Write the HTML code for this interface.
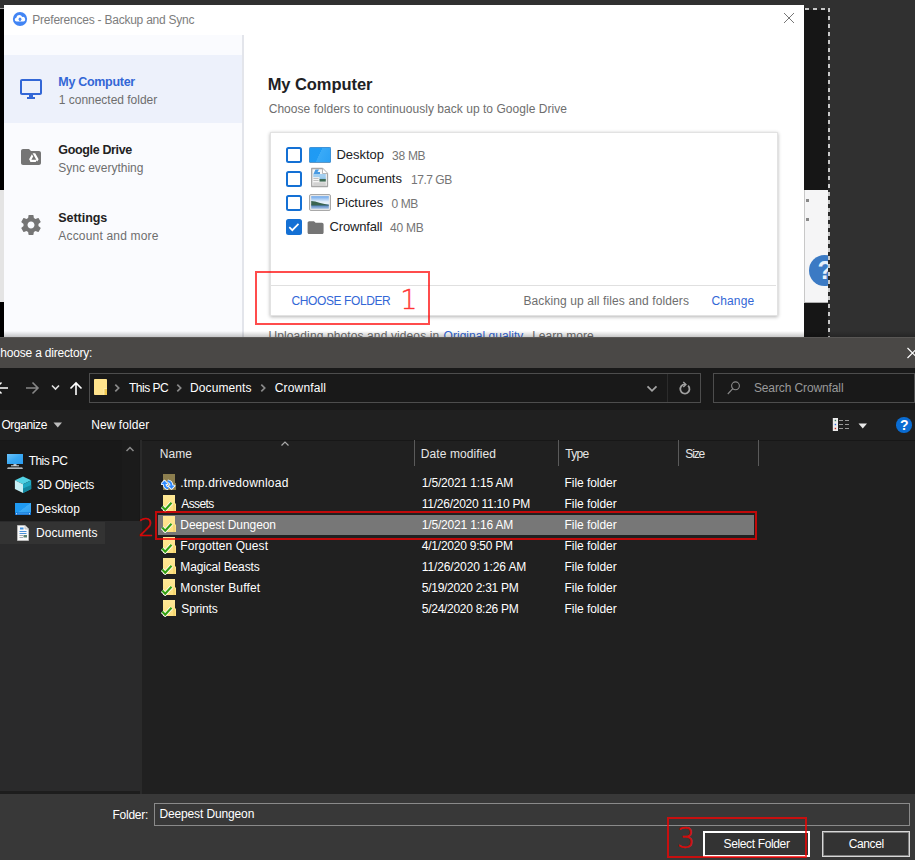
<!DOCTYPE html>
<html><head><meta charset="utf-8">
<style>
*{box-sizing:border-box;margin:0;padding:0}
html,body{width:915px;height:860px;overflow:hidden;background:#303030}
body{position:relative;font-family:"Liberation Sans",sans-serif}
.a{position:absolute}
.t{position:absolute;white-space:nowrap;line-height:1.15}
.cb{width:16px;height:16px;border:2px solid #1470d4;border-radius:2.500px;background:#fff}
.cb.on{background:#1470d4}
.num{-webkit-text-stroke:0.550px currentColor;position:absolute;font-family:"DejaVu Sans Light","DejaVu Sans",sans-serif;font-weight:200;line-height:1;white-space:nowrap}
</style></head><body>

<div class="a" style="left:0;top:9px;width:4px;height:328px;background:#000"></div>
<div class="a" style="left:0;top:8px;width:4px;height:1px;background:#999"></div>
<div class="a" style="left:0;top:190px;width:4px;height:112px;background:#e4e4e4"></div>
<div class="a" style="left:804px;top:8px;width:24px;height:329px;background:#161616"></div>
<div class="a" style="left:804px;top:190px;width:24px;height:113px;background:#f5f5f6;overflow:hidden;border-left:1px solid #c8c8c8;border-bottom:1px solid #b0b0b0">
<div style="position:absolute;left:3.500px;top:65px;width:31px;height:31px;border-radius:50%;background:#3b7ac4"></div>
<div class="t" style="left:12.500px;top:66px;font-size:25px;font-weight:bold;color:#e8f0fa">?</div>
<div style="position:absolute;left:1px;top:9px;width:3px;height:3px;background:#888"></div>
<div style="position:absolute;left:1px;top:28px;width:3px;height:3px;background:#888"></div>
</div>
<div class="a" style="left:805px;top:8px;width:25px;height:2px;background:repeating-linear-gradient(90deg,#c8c8c8 0,#c8c8c8 4px,#2a2a2a 4px,#2a2a2a 8px)"></div>
<div class="a" style="left:828px;top:8px;width:2px;height:329px;background:repeating-linear-gradient(180deg,#c8c8c8 0,#c8c8c8 4px,#2a2a2a 4px,#2a2a2a 8px)"></div>

<div class="a" style="left:4px;top:5px;width:800px;height:332px;background:#fff"></div>
<div class="a" style="left:4px;top:35px;width:238.300px;height:302px;background:#fafbfe"></div>
<div class="a" style="left:242.300px;top:35px;width:2.100px;height:302px;background:#e3e5eb"></div>
<div class="a" style="left:4px;top:55px;width:238.300px;height:68px;background:#edf1fb"></div>
<svg class="a" style="left:12px;top:11px" width="16" height="16" viewBox="0 0 16 16"><circle cx="8" cy="8" r="7.1" fill="#4285f4"/><path d="M4.6 10.6a2 2 0 0 1-.3-3.95 3.1 3.1 0 0 1 5.9-.7 2.35 2.35 0 0 1 1.1 4.65z" fill="#fff"/><path d="M8 6.3l2.1 2.2H8.8v1.6H7.2V8.5H5.9z" fill="#4285f4"/></svg>
<svg class="a" style="left:783px;top:12px" width="12" height="12" viewBox="0 0 12 12"><path d="M1 1l10 10M11 1L1 11" stroke="#777" stroke-width="1" fill="none"/></svg>
<svg class="a" style="left:19px;top:77px" width="24" height="24" viewBox="0 0 24 24"><path fill="#3367d6" d="M21 2H3c-1.1 0-2 .9-2 2v12c0 1.1.9 2 2 2h7v2H8v2h8v-2h-2v-2h7c1.1 0 2-.9 2-2V4c0-1.1-.9-2-2-2zm0 14H3V4h18v12z"/></svg>
<svg class="a" style="left:19px;top:145px" width="24" height="24" viewBox="0 0 24 24"><path fill="#757575" d="M10 4H4c-1.1 0-1.99.9-1.990 2L2 18c0 1.1.9 2 2 2h16c1.1 0 2-.9 2-2V8c0-1.1-.9-2-2-2h-8l-2-2z"/><path fill="#fff" d="M13.6 8.300h2.600l3.400 5.900-1.300 2.200zM12.900 9.300l1.300 2.200-2.800 4.900-1.300-2.200zM12.300 14.800h5.700l-1.300 2.200h-5.700z"/></svg>
<svg class="a" style="left:19px;top:213px" width="24" height="24" viewBox="0 0 24 24"><path fill="#757575" d="M19.430 12.980c.04-.32.07-.64.07-.98s-.03-.66-.07-.98l2.110-1.650c.19-.15.24-.42.12-.64l-2-3.460c-.12-.22-.39-.3-.61-.22l-2.490 1c-.52-.4-1.080-.73-1.690-.98l-.38-2.650C14.460 2.180 14.250 2 14 2h-4c-.25 0-.46.18-.49.42l-.38 2.650c-.61.25-1.170.59-1.690.98l-2.490-1c-.23-.09-.49 0-.61.22l-2 3.460c-.13.22-.07.49.12.64l2.110 1.650c-.04.32-.07.65-.07.980s.03.66.07.98l-2.110 1.650c-.19.15-.24.42-.12.64l2 3.460c.12.22.39.3.61.22l2.490-1c.52.4 1.080.73 1.690.98l.38 2.650c.03.24.24.42.49.42h4c.25 0 .46-.18.49-.42l.38-2.650c.61-.25 1.170-.59 1.690-.98l2.490 1c.23.09.49 0 .61-.22l2-3.460c.12-.22.07-.49-.12-.64l-2.110-1.650zM12 15.500c-1.930 0-3.500-1.570-3.500-3.500s1.570-3.500 3.500-3.500 3.500 1.570 3.500 3.500-1.570 3.500-3.500 3.500z"/></svg>

<div class="t" style="left:32.30px;top:14px;font-size:12px;color:#7d7d7d;letter-spacing:-0.232px;">Preferences - Backup and Sync</div>
<div class="t" style="left:58.30px;top:75px;font-size:12.5px;color:#3367d6;font-weight:bold;letter-spacing:-0.300px;">My Computer</div>
<div class="t" style="left:58.80px;top:94px;font-size:12px;color:#6e6e6e;letter-spacing:-0.018px;">1 connected folder</div>
<div class="t" style="left:58.30px;top:143px;font-size:12.5px;color:#222;font-weight:bold;letter-spacing:-0.345px;">Google Drive</div>
<div class="t" style="left:58.30px;top:162px;font-size:12px;color:#6e6e6e;letter-spacing:-0.021px;">Sync everything</div>
<div class="t" style="left:58.30px;top:211px;font-size:12.5px;color:#222;font-weight:bold;letter-spacing:-0.043px;">Settings</div>
<div class="t" style="left:58.30px;top:230px;font-size:12px;color:#6e6e6e;letter-spacing:0.180px;">Account and more</div>
<div class="t" style="left:267.70px;top:75px;font-size:16.5px;color:#202124;font-weight:bold;letter-spacing:-0.070px;">My Computer</div>
<div class="t" style="left:268.70px;top:103px;font-size:12px;color:#6e6e6e;letter-spacing:0.038px;">Choose folders to continuously back up to Google Drive</div>
<div class="a" style="left:270.400px;top:132px;width:507.200px;height:184px;background:#fff;border:1px solid #e2e2e2;box-shadow:0 1px 3.500px rgba(0,0,0,.3)"></div>
<div class="a" style="left:271px;top:285px;width:505px;height:1px;background:#e0e0e0"></div>
<div class="a cb" style="left:286px;top:147px"></div>
<div class="a cb" style="left:286px;top:171px"></div>
<div class="a cb" style="left:286px;top:195px"></div>
<div class="a cb on" style="left:286px;top:219px"><svg width="16" height="16" viewBox="0 0 16 16" style="position:absolute;left:-2px;top:-2px"><path d="M3.300 8.200l3 3 6.200-6.300" stroke="#fff" stroke-width="1.700" fill="none"/></svg></div>
<div class="a" style="left:309.300px;top:147px;width:21.500px;height:15.600px;background:linear-gradient(115deg,#1f9af3 0%,#1f9bf4 46%,#3aaaf7 47%,#2ba1f5 100%);border:1px solid #3f93d8;border-bottom:1.500px solid #5f97c4;border-radius:1.500px"></div>
<svg class="a" style="left:310px;top:167px" width="19" height="21" viewBox="0 0 19 21"><path d="M1.700 1.500h10.800l5 5v13h-15.800z" fill="#f6f6f6" stroke="#a6a6a6" stroke-width="1.300" stroke-linejoin="round"/><path d="M12.500 1.500v5h5" fill="#fff" stroke="#b0b0b0" stroke-width=".9"/><path d="M3.500 7l2-4.500h3.500l-1.500 2.500h2.500v2z" fill="#4a9be2"/><rect x="3.200" y="7" width="12.600" height="3.200" fill="#a3cff0"/><rect x="9.500" y="10.200" width="6.300" height="2.200" fill="#8ec2e6"/><rect x="9.500" y="12" width="6.300" height="2.600" fill="#3f6b55"/><rect x="3.400" y="11" width="5.200" height=".9" fill="#bcbcbc"/><rect x="3.400" y="13" width="5.200" height=".9" fill="#bcbcbc"/><rect x="3.200" y="15.300" width="12.600" height="3.700" fill="#d2d2d2"/></svg>
<svg class="a" style="left:309px;top:193.800px" width="22" height="17" viewBox="0 0 22 17"><defs><linearGradient id="gsky" x1="0" y1="0" x2="0" y2="1"><stop offset="0" stop-color="#6aa5ea"/><stop offset=".45" stop-color="#e6f0fa"/><stop offset="1" stop-color="#e6f0fa"/></linearGradient><linearGradient id="gwat" x1="0" y1="0" x2="0" y2="1"><stop offset="0" stop-color="#3e72b6"/><stop offset="1" stop-color="#a9c3e2"/></linearGradient></defs><rect x=".5" y=".5" width="21" height="16" rx="1.500" fill="#e6e6e6" stroke="#a8a8a8"/><rect x="2.200" y="2.200" width="17.600" height="12.600" fill="url(#gsky)"/><rect x="2.200" y="10.500" width="17.600" height="4.300" fill="url(#gwat)"/><path d="M2.200 7l4 .4 5 1.600 8.600 2v.6H2.200z" fill="#3a6450"/></svg>
<svg class="a" style="left:306.400px;top:217.800px" width="19.200" height="19.200" viewBox="0 0 24 24"><path fill="#757575" d="M10 4H4c-1.100 0-1.990.9-1.990 2L2 18c0 1.100.9 2 2 2h16c1.100 0 2-.9 2-2V8c0-1.100-.9-2-2-2h-8l-2-2z"/></svg>

<div class="t" style="left:336.40px;top:148px;font-size:13px;color:#202124;letter-spacing:0.000px;">Desktop</div>
<div class="t" style="left:392.10px;top:150px;font-size:12px;color:#757575;letter-spacing:-0.300px;">38 MB</div>
<div class="t" style="left:336.40px;top:172px;font-size:13px;color:#202124;letter-spacing:-0.025px;">Documents</div>
<div class="t" style="left:411.00px;top:174px;font-size:12px;color:#757575;letter-spacing:-0.467px;">17.7 GB</div>
<div class="t" style="left:336.40px;top:196px;font-size:13px;color:#202124;letter-spacing:-0.029px;">Pictures</div>
<div class="t" style="left:391.50px;top:198px;font-size:12px;color:#757575;letter-spacing:-0.433px;">0 MB</div>
<div class="t" style="left:329.60px;top:220px;font-size:13px;color:#202124;letter-spacing:-0.162px;">Crownfall</div>
<div class="t" style="left:390.00px;top:222px;font-size:12px;color:#757575;letter-spacing:-0.250px;">40 MB</div>
<div class="t" style="left:291.50px;top:295px;font-size:12px;color:#3367d6;letter-spacing:-0.400px;">CHOOSE FOLDER</div>
<div class="t" style="left:523.40px;top:295px;font-size:12px;color:#6e6e6e;letter-spacing:0.110px;">Backing up all files and folders</div>
<div class="t" style="left:711.40px;top:295px;font-size:12px;color:#3367d6;letter-spacing:0.140px;">Change</div>
<div class="t" style="left:268.40px;top:330px;font-size:12px;color:#6e6e6e;letter-spacing:0.114px;">Uploading photos and videos in</div>
<div class="t" style="left:443.60px;top:330px;font-size:12px;color:#3367d6;letter-spacing:0.027px;">Original quality</div>
<div class="t" style="left:525.50px;top:330px;font-size:12px;color:#6e6e6e;letter-spacing:0.009px;">. Learn more</div>
<div class="a" style="left:255px;top:271px;width:175px;height:54px;border:2px solid rgba(255,0,0,.7)"></div>
<div class="num" style="left:400.300px;top:286px;font-size:27px;color:rgba(255,0,0,.7)">1</div>
<div class="a" style="left:0;top:331px;width:915px;height:6px;background:linear-gradient(180deg,rgba(0,0,0,0),rgba(0,0,0,.22))"></div>
<div class="a" style="left:0;top:337px;width:915px;height:31px;background:#4a4846"></div>
<div class="a" style="left:0;top:337px;width:915px;height:1px;background:#595755"></div>
<div class="a" style="left:0;top:368px;width:915px;height:42px;background:#191919"></div>
<div class="a" style="left:0;top:410px;width:915px;height:30px;background:#202020"></div>
<div class="a" style="left:0;top:440px;width:140px;height:351px;background:#2a2a2b"></div>
<div class="a" style="left:0;top:791px;width:140px;height:3px;background:#1d1d1d"></div>
<div class="a" style="left:0;top:440px;width:140px;height:81px;background:#191919"></div>
<div class="a" style="left:140px;top:440px;width:775px;height:354px;background:#202020"></div>
<div class="a" style="left:0;top:439.500px;width:915px;height:1px;background:#171717"></div>
<div class="a" style="left:0;top:794px;width:915px;height:66px;background:#383838"></div>

<div class="t" style="left:-8.20px;top:347px;font-size:12px;color:#fff;letter-spacing:-0.194px;">Choose a directory:</div>
<svg class="a" style="left:906px;top:346.500px" width="12" height="12" viewBox="0 0 12 12"><path d="M1.500 1l10 10M11.500 1l-10 10" stroke="#fff" stroke-width="1.200" fill="none"/></svg>
<svg class="a" style="left:0;top:380px" width="90" height="16" viewBox="0 0 90 16">
<path d="M-4 8h12M1.500 2.500L-4 8l5.500 5.500" stroke="#fff" stroke-width="1.500" fill="none"/>
<path d="M26 8h12M32.500 2.500L38 8l-5.500 5.500" stroke="#868686" stroke-width="1.600" fill="none"/>
<path d="M52 5.500l3.500 3.500 3.500-3.500" stroke="#e0e0e0" stroke-width="1.600" fill="none"/>
<path d="M76 15V3M70.500 8.500L76 3l5.500 5.500" stroke="#fff" stroke-width="1.600" fill="none"/>
</svg>
<div class="a" style="left:89px;top:373px;width:612px;height:30px;border:1px solid #4d4d4d;background:#191919"></div>
<div class="a" style="left:667px;top:374px;width:1px;height:28px;background:#2c2c2c"></div>
<svg class="a" style="left:93px;top:378px" width="15" height="18" viewBox="0 0 15 18"><rect x="1" y="1" width="13" height="16" rx=".8" fill="#ffe38c"/><rect x="11" y="10.500" width="3" height="6.500" fill="#f0c850"/><path d="M11 17v-6.500h3" stroke="#fff0b8" stroke-width=".8" fill="none"/></svg>
<svg class="a" style="left:114.0px;top:383px" width="7" height="10" viewBox="0 0 7 10"><path d="M1.300 1.600l3.400 3.400-3.400 3.400" stroke="#8a8a8a" stroke-width="1.700" fill="none"/></svg>
<svg class="a" style="left:176.0px;top:383px" width="7" height="10" viewBox="0 0 7 10"><path d="M1.300 1.600l3.400 3.400-3.400 3.400" stroke="#8a8a8a" stroke-width="1.700" fill="none"/></svg>
<svg class="a" style="left:260.0px;top:383px" width="7" height="10" viewBox="0 0 7 10"><path d="M1.300 1.600l3.400 3.400-3.400 3.400" stroke="#8a8a8a" stroke-width="1.700" fill="none"/></svg>
<div class="t" style="left:129.00px;top:382px;font-size:12px;color:#fff;letter-spacing:-0.500px;">This PC</div>
<div class="t" style="left:190.00px;top:382px;font-size:12px;color:#fff;letter-spacing:0.100px;">Documents</div>
<div class="t" style="left:274.80px;top:382px;font-size:12px;color:#fff;letter-spacing:0.150px;">Crownfall</div>
<svg class="a" style="left:646px;top:383px" width="12" height="10" viewBox="0 0 12 10"><path d="M1.500 3.300l4.500 4.500 4.500-4.500" stroke="#a4a4a4" stroke-width="1.800" fill="none"/></svg>
<svg class="a" style="left:677px;top:380px" width="16" height="16" viewBox="0 0 16 16"><path d="M11.100 5.700A4.600 4.600 0 1 1 8 4.400" stroke="#a0a0a0" stroke-width="1.800" fill="none"/><path d="M6.300 1.900l2.600 2.500-2.600 2.500" stroke="#a0a0a0" stroke-width="1.400" fill="none"/></svg>
<div class="a" style="left:713px;top:373px;width:202px;height:30px;border:1px solid #4d4d4d;background:#191919"></div>
<svg class="a" style="left:726px;top:380px" width="16" height="16" viewBox="0 0 16 16"><circle cx="9.500" cy="5.800" r="3.900" stroke="#8a8a8a" stroke-width="1.100" fill="none"/><path d="M6.800 8.700L1.800 14" stroke="#8a8a8a" stroke-width="1.100"/></svg>
<div class="t" style="left:753.90px;top:382px;font-size:12px;color:#9a9a9a;letter-spacing:-0.113px;">Search Crownfall</div>
<div class="t" style="left:1.40px;top:419px;font-size:12px;color:#fff;letter-spacing:-0.386px;">Organize</div>
<svg class="a" style="left:53px;top:422px" width="10" height="6" viewBox="0 0 10 6"><path d="M0.500 0.500h8.500l-4.250 5z" fill="#bdbdbd"/></svg>
<div class="t" style="left:91.30px;top:419px;font-size:12px;color:#fff;letter-spacing:0.056px;">New folder</div>
<svg class="a" style="left:832px;top:418px" width="20" height="14" viewBox="0 0 20 14"><rect x=".8" y="0" width="5.200" height="13" fill="#ececec"/><rect x="2.700" y="1.800" width="1.400" height="1.400" fill="#3a7a5a"/><rect x="2.700" y="5.800" width="1.400" height="1.400" fill="#2a64d8"/><rect x="2.700" y="9.800" width="1.400" height="1.400" fill="#c8281e"/><path d="M7 2.500h4M13 2.500h4M7 6.500h4M13 6.500h4M7 10.500h4M13 10.500h4" stroke="#9a9a9a" stroke-width="1"/></svg>
<svg class="a" style="left:858px;top:422.500px" width="10" height="6" viewBox="0 0 10 6"><path d="M0.500 0.500h8.500l-4.250 5z" fill="#e8e8e8"/></svg>
<div class="a" style="left:896.200px;top:417.100px;width:15.700px;height:15.700px;border-radius:50%;background:#0a6cd2"></div>
<div class="t" style="left:900px;top:417px;font-size:14px;font-weight:bold;color:#fff">?</div>
<div class="a" style="left:0;top:522px;width:105px;height:22px;background:#333"></div>
<div class="a" style="left:122px;top:440px;width:17px;height:81px;background:#1b1b1b"></div>
<svg class="a" style="left:125px;top:445px" width="10" height="8" viewBox="0 0 10 8"><path d="M1.500 6l3.500-3.500 3.500 3.500" stroke="#8a8a8a" stroke-width="1.500" fill="none"/></svg>
<div class="a" style="left:139.500px;top:440px;width:2px;height:354px;background:#2a2a2a"></div>
<svg class="a" style="left:6px;top:453px" width="18" height="17" viewBox="0 0 18 17"><defs><linearGradient id="gpc" x1="0" y1="0" x2="1" y2="1"><stop offset="0" stop-color="#6cc4fb"/><stop offset=".5" stop-color="#3aa9f4"/><stop offset="1" stop-color="#2a9cf0"/></linearGradient></defs><rect x="1" y="1" width="16" height="10" fill="url(#gpc)"/><rect x="7.500" y="11" width="3" height="2" fill="#b8c4cc"/><rect x="5" y="12.300" width="8" height="1" fill="#cfd8de"/><path d="M1.800 14.500h14.400l.8 1.300h-16z" fill="#e4edf3"/></svg>
<svg class="a" style="left:14px;top:476px" width="18" height="18" viewBox="0 0 18 18"><path d="M9 .6l8.200 3.700-8.200 3.900-8.100-3.900z" fill="#52d2e4"/><path d="M.9 4.300l8.100 3.900V17L.9 13z" fill="#c6eff5"/><path d="M17.200 4.300L9 8.200V17l8.200-4z" fill="#1fa9c3"/><path d="M9 12.500l8.200-3.500v4L9 17z" fill="#12879f"/></svg>
<svg class="a" style="left:14px;top:502px" width="18" height="14" viewBox="0 0 18 14"><defs><linearGradient id="gdk" x1="0" y1="0" x2="1" y2="1"><stop offset="0" stop-color="#1f9af2"/><stop offset=".48" stop-color="#1f9af2"/><stop offset=".5" stop-color="#3dabf6"/><stop offset="1" stop-color="#2aa0f4"/></linearGradient></defs><rect x="1" y="1" width="16" height="12" fill="url(#gdk)"/><rect x="1" y="10.500" width="16" height="2.500" fill="#0f6fd0"/><rect x="2" y="11.300" width="1.200" height="1" fill="#fff"/><rect x="14.800" y="11.300" width="1.200" height="1" fill="#fff"/><rect x="4" y="11.500" width="10" height=".7" fill="#5fb4f5"/></svg>
<svg class="a" style="left:16px;top:524px" width="14" height="18" viewBox="0 0 14 18"><path d="M1.500 1.500h7.500l3.500 3.500v11.500h-11z" fill="#fafafa" stroke="#b8b8b8" stroke-width="1"/><path d="M9 1.500v3.500h3.500" fill="#e8e8e8" stroke="#b8b8b8" stroke-width=".8"/><rect x="4" y="3.500" width="3.500" height="2" fill="#3f8fe0"/><path d="M3.500 7.500h7M3.500 9.500h7" stroke="#4a90d9" stroke-width="1"/><path d="M3.500 11.500h3.500M3.500 13.500h3.500" stroke="#a0a8b0" stroke-width="1"/><rect x="7.500" y="11" width="3.500" height="2.500" fill="#5a8070"/></svg>
<div class="t" style="left:28.70px;top:455px;font-size:12px;color:#fff;letter-spacing:-0.567px;">This PC</div>
<div class="t" style="left:36.90px;top:479px;font-size:12px;color:#fff;letter-spacing:-0.222px;">3D Objects</div>
<div class="t" style="left:35.90px;top:503px;font-size:12px;color:#fff;letter-spacing:0.000px;">Desktop</div>
<div class="t" style="left:35.90px;top:527px;font-size:12px;color:#fff;letter-spacing:0.125px;">Documents</div>
<div class="a" style="left:414px;top:440px;width:1px;height:26px;background:#5a5a5a"></div>
<div class="a" style="left:558px;top:440px;width:1px;height:26px;background:#5a5a5a"></div>
<div class="a" style="left:678px;top:440px;width:1px;height:26px;background:#5a5a5a"></div>
<div class="a" style="left:758px;top:440px;width:1px;height:26px;background:#5a5a5a"></div>
<svg class="a" style="left:280px;top:440px" width="10" height="7" viewBox="0 0 10 7"><path d="M1.500 5.500l3.500-3.500 3.500 3.500" stroke="#aaa" stroke-width="1.200" fill="none"/></svg>
<div class="t" style="left:159.70px;top:448px;font-size:12px;color:#e6e6e6;letter-spacing:0.067px;">Name</div>
<div class="t" style="left:420.80px;top:448px;font-size:12px;color:#e6e6e6;letter-spacing:0.083px;">Date modified</div>
<div class="t" style="left:565.30px;top:448px;font-size:12px;color:#e6e6e6;letter-spacing:-0.733px;">Type</div>
<div class="t" style="left:685.30px;top:448px;font-size:12px;color:#e6e6e6;letter-spacing:-1.133px;">Size</div>
<div class="a" style="left:157.600px;top:514.700px;width:596.400px;height:20.500px;background:#777"></div>
<svg class="a" style="left:161px;top:474px" width="16" height="17" viewBox="0 0 16 17"><path d="M2 0h12v9h1v7H2z" fill="#8c7e4e"/><path d="M14 9v7" stroke="#7c6e3c" stroke-width=".8"/><g fill="none" stroke-linejoin="round" transform="translate(0,-.7)"><path d="M.6 10.600l2.900-3.100 2.900 3.100zM7.600 12.400l2.900 3.100 2.900-3.100z" fill="#fff" stroke="#fff" stroke-width="2"/><path d="M3.500 10q0 4.600 3.800 5M10.500 13q0-4.600-3.800-5" stroke="#fff" stroke-width="3.600"/><path d="M.6 10.600l2.900-3.100 2.900 3.100zM7.600 12.400l2.900 3.100 2.900-3.100z" fill="#2f8bff" stroke="#2f8bff" stroke-width=".4"/><path d="M3.500 10q0 4.600 3.800 5M10.500 13q0-4.600-3.800-5" stroke="#2f8bff" stroke-width="2"/></g></svg>
<div class="t" style="left:180.30px;top:477px;font-size:12px;color:#fff;letter-spacing:0.235px;">.tmp.drivedownload</div>
<div class="t" style="left:421.80px;top:477px;font-size:12px;color:#fff;letter-spacing:-0.173px;">1/5/2021 1:15 AM</div>
<div class="t" style="left:564.50px;top:477px;font-size:12px;color:#fff;letter-spacing:-0.050px;">File folder</div>
<svg class="a" style="left:160px;top:495px" width="17" height="17" viewBox="0 0 17 17"><defs><linearGradient id="gf1" x1="0" y1="0" x2="0" y2="1"><stop offset="0" stop-color="#ffe896"/><stop offset="1" stop-color="#fde080"/></linearGradient></defs><path d="M3 0h12v8.600h1v7.400H3z" fill="url(#gf1)"/><path d="M14 9v7" stroke="#ecca5c" stroke-width=".9"/><path d="M2.200 11.600l3 3.100 6.300-7" stroke="#fff" stroke-width="3.700" fill="none"/><path d="M2.200 11.600l3 3.100 6.300-7" stroke="#34a010" stroke-width="2.100" fill="none"/></svg>
<div class="t" style="left:181.30px;top:498px;font-size:12px;color:#fff;letter-spacing:-0.600px;">Assets</div>
<div class="t" style="left:421.80px;top:498px;font-size:12px;color:#fff;letter-spacing:-0.256px;">11/26/2020 11:10 PM</div>
<div class="t" style="left:564.50px;top:498px;font-size:12px;color:#fff;letter-spacing:-0.050px;">File folder</div>
<svg class="a" style="left:160px;top:516px" width="17" height="17" viewBox="0 0 17 17"><defs><linearGradient id="gf2" x1="0" y1="0" x2="0" y2="1"><stop offset="0" stop-color="#ffe896"/><stop offset="1" stop-color="#fde080"/></linearGradient></defs><path d="M3 0h12v8.600h1v7.400H3z" fill="url(#gf2)"/><path d="M14 9v7" stroke="#ecca5c" stroke-width=".9"/><path d="M2.200 11.600l3 3.100 6.300-7" stroke="#fff" stroke-width="3.700" fill="none"/><path d="M2.200 11.600l3 3.100 6.300-7" stroke="#34a010" stroke-width="2.100" fill="none"/></svg>
<div class="t" style="left:180.30px;top:519px;font-size:12px;color:#fff;letter-spacing:-0.071px;">Deepest Dungeon</div>
<div class="t" style="left:421.80px;top:519px;font-size:12px;color:#fff;letter-spacing:-0.173px;">1/5/2021 1:16 AM</div>
<div class="t" style="left:564.50px;top:519px;font-size:12px;color:#fff;letter-spacing:-0.050px;">File folder</div>
<svg class="a" style="left:160px;top:537px" width="17" height="17" viewBox="0 0 17 17"><defs><linearGradient id="gf3" x1="0" y1="0" x2="0" y2="1"><stop offset="0" stop-color="#ffe896"/><stop offset="1" stop-color="#fde080"/></linearGradient></defs><path d="M3 0h12v8.600h1v7.400H3z" fill="url(#gf3)"/><path d="M14 9v7" stroke="#ecca5c" stroke-width=".9"/><path d="M2.200 11.600l3 3.100 6.300-7" stroke="#fff" stroke-width="3.700" fill="none"/><path d="M2.200 11.600l3 3.100 6.300-7" stroke="#34a010" stroke-width="2.100" fill="none"/></svg>
<div class="t" style="left:180.30px;top:540px;font-size:12px;color:#fff;letter-spacing:0.071px;">Forgotten Quest</div>
<div class="t" style="left:421.80px;top:540px;font-size:12px;color:#fff;letter-spacing:-0.233px;">4/1/2020 9:50 PM</div>
<div class="t" style="left:564.50px;top:540px;font-size:12px;color:#fff;letter-spacing:-0.050px;">File folder</div>
<svg class="a" style="left:160px;top:558px" width="17" height="17" viewBox="0 0 17 17"><defs><linearGradient id="gf4" x1="0" y1="0" x2="0" y2="1"><stop offset="0" stop-color="#ffe896"/><stop offset="1" stop-color="#fde080"/></linearGradient></defs><path d="M3 0h12v8.600h1v7.400H3z" fill="url(#gf4)"/><path d="M14 9v7" stroke="#ecca5c" stroke-width=".9"/><path d="M2.200 11.600l3 3.100 6.300-7" stroke="#fff" stroke-width="3.700" fill="none"/><path d="M2.200 11.600l3 3.100 6.300-7" stroke="#34a010" stroke-width="2.100" fill="none"/></svg>
<div class="t" style="left:180.30px;top:561px;font-size:12px;color:#fff;letter-spacing:-0.154px;">Magical Beasts</div>
<div class="t" style="left:421.80px;top:561px;font-size:12px;color:#fff;letter-spacing:-0.118px;">11/26/2020 1:26 AM</div>
<div class="t" style="left:564.50px;top:561px;font-size:12px;color:#fff;letter-spacing:-0.050px;">File folder</div>
<svg class="a" style="left:160px;top:579px" width="17" height="17" viewBox="0 0 17 17"><defs><linearGradient id="gf5" x1="0" y1="0" x2="0" y2="1"><stop offset="0" stop-color="#ffe896"/><stop offset="1" stop-color="#fde080"/></linearGradient></defs><path d="M3 0h12v8.600h1v7.400H3z" fill="url(#gf5)"/><path d="M14 9v7" stroke="#ecca5c" stroke-width=".9"/><path d="M2.200 11.600l3 3.100 6.300-7" stroke="#fff" stroke-width="3.700" fill="none"/><path d="M2.200 11.600l3 3.100 6.300-7" stroke="#34a010" stroke-width="2.100" fill="none"/></svg>
<div class="t" style="left:180.30px;top:582px;font-size:12px;color:#fff;letter-spacing:0.154px;">Monster Buffet</div>
<div class="t" style="left:421.80px;top:582px;font-size:12px;color:#fff;letter-spacing:-0.281px;">5/19/2020 2:31 PM</div>
<div class="t" style="left:564.50px;top:582px;font-size:12px;color:#fff;letter-spacing:-0.050px;">File folder</div>
<svg class="a" style="left:160px;top:600px" width="17" height="17" viewBox="0 0 17 17"><defs><linearGradient id="gf6" x1="0" y1="0" x2="0" y2="1"><stop offset="0" stop-color="#ffe896"/><stop offset="1" stop-color="#fde080"/></linearGradient></defs><path d="M3 0h12v8.600h1v7.400H3z" fill="url(#gf6)"/><path d="M14 9v7" stroke="#ecca5c" stroke-width=".9"/><path d="M2.200 11.600l3 3.100 6.300-7" stroke="#fff" stroke-width="3.700" fill="none"/><path d="M2.200 11.600l3 3.100 6.300-7" stroke="#34a010" stroke-width="2.100" fill="none"/></svg>
<div class="t" style="left:181.30px;top:603px;font-size:12px;color:#fff;letter-spacing:-0.167px;">Sprints</div>
<div class="t" style="left:421.80px;top:603px;font-size:12px;color:#fff;letter-spacing:-0.281px;">5/24/2020 8:26 PM</div>
<div class="t" style="left:564.50px;top:603px;font-size:12px;color:#fff;letter-spacing:-0.050px;">File folder</div>
<div class="a" style="left:155px;top:511px;width:602px;height:29px;border:2px solid rgba(255,0,0,.72)"></div>
<div class="num" style="left:138px;top:514.700px;font-size:25px;color:rgba(255,0,0,.72)">2</div>
<div class="t" style="left:112.40px;top:809px;font-size:12px;color:#fff;letter-spacing:-0.217px;">Folder:</div>
<div class="a" style="left:154px;top:802.500px;width:756px;height:23px;border:1px solid #8a8a8a;background:#383838"></div>
<div class="t" style="left:159.40px;top:808px;font-size:12px;color:#fff;letter-spacing:-0.129px;">Deepest Dungeon</div>
<div class="a" style="left:703px;top:831px;width:107px;height:26px;border:2px solid #fff;background:#333"></div>
<div class="a" style="left:822px;top:831px;width:88.400px;height:26px;border:1px solid #d8d8d8;box-shadow:inset 0 0 0 1px #808080;background:#333"></div>
<div class="t" style="left:723.50px;top:838px;font-size:12px;color:#fff;letter-spacing:-0.358px;">Select Folder</div>
<div class="t" style="left:848.70px;top:838px;font-size:12px;color:#fff;letter-spacing:-0.380px;">Cancel</div>
<div class="a" style="left:667px;top:817px;width:140px;height:41px;border:2px solid rgba(255,0,0,.72)"></div>
<div class="num" style="left:677px;top:825.300px;font-size:28px;color:rgba(255,0,0,.72)">3</div>
</body></html>
